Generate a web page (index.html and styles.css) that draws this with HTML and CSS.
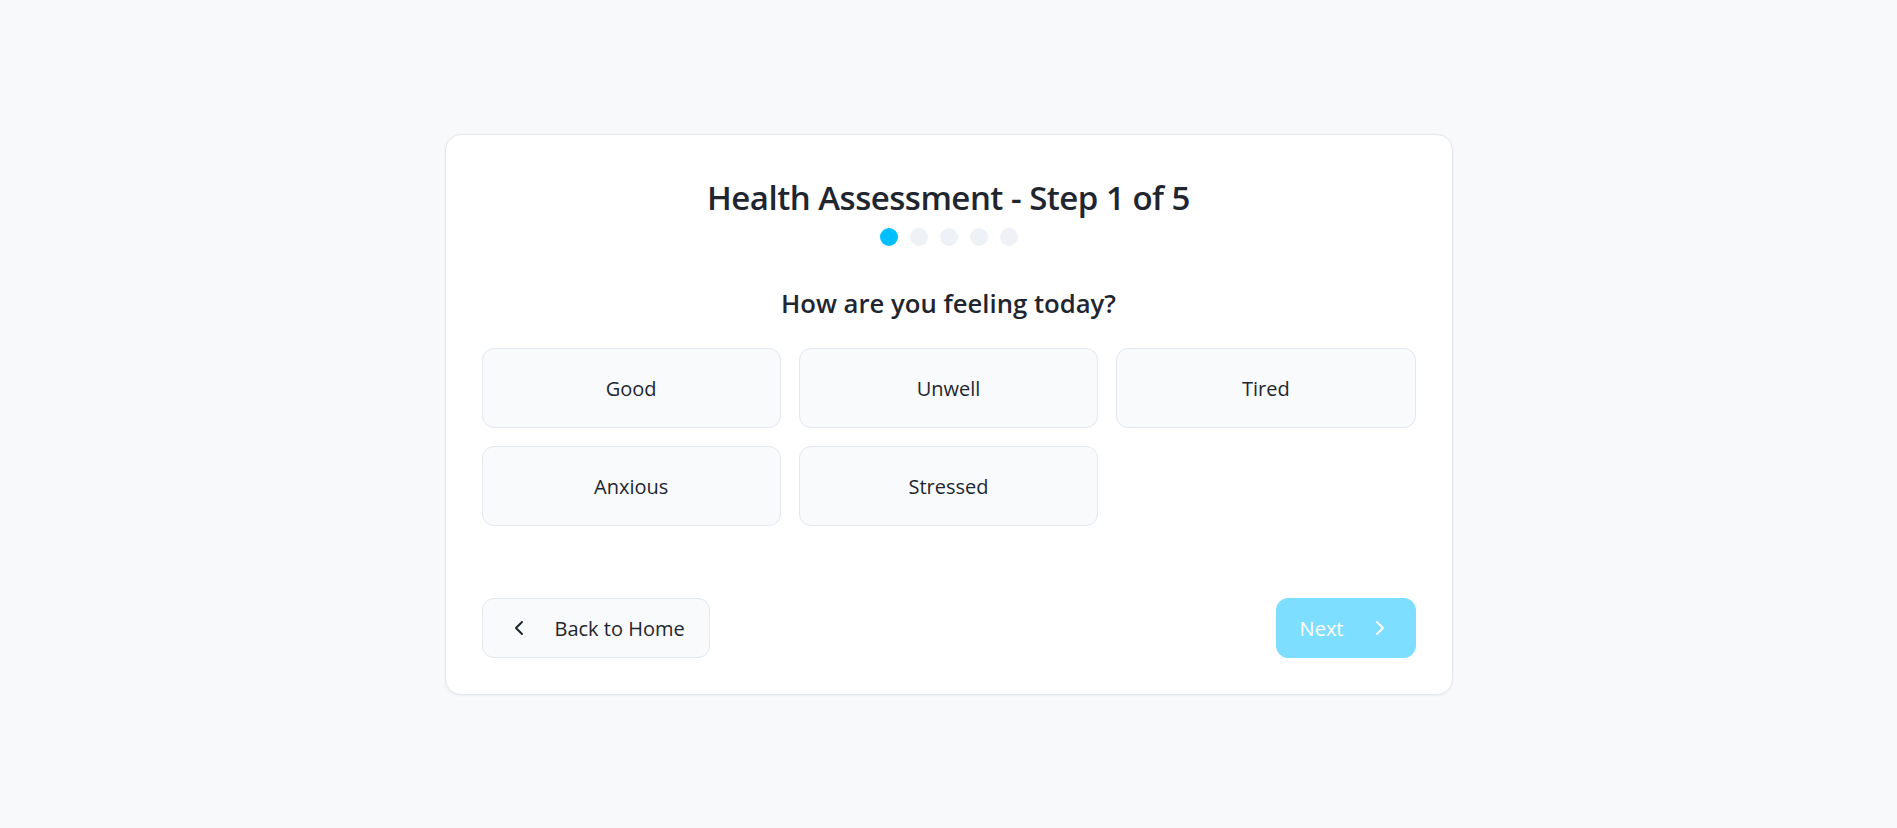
FILE: index.html
```html
<!DOCTYPE html>
<html lang="en">
<head>
<meta charset="utf-8">
<title>Health Assessment</title>
<link rel="stylesheet" href="styles.css">
</head>
<body>
<main class="page">
  <section class="card">
    <h1 class="title">Health Assessment - Step 1 of 5</h1>
    <div class="steps">
      <span class="dot dot-active"></span>
      <span class="dot"></span>
      <span class="dot"></span>
      <span class="dot"></span>
      <span class="dot"></span>
    </div>
    <h2 class="question">How are you feeling today?</h2>
    <div class="options">
      <button class="option">Good</button>
      <button class="option">Unwell</button>
      <button class="option">Tired</button>
      <button class="option">Anxious</button>
      <button class="option">Stressed</button>
    </div>
    <div class="actions">
      <button class="btn btn-back">
        <svg class="icon" viewBox="0 0 24 24" width="24" height="24" fill="none" stroke="currentColor" stroke-width="2" stroke-linecap="round" stroke-linejoin="round"><path d="m15 18-6-6 6-6"/></svg>
        <span>Back to Home</span>
      </button>
      <button class="btn btn-next" disabled>
        <span>Next</span>
        <svg class="icon" viewBox="0 0 24 24" width="24" height="24" fill="none" stroke="currentColor" stroke-width="2" stroke-linecap="round" stroke-linejoin="round"><path d="m9 18 6-6-6-6"/></svg>
      </button>
    </div>
  </section>
</main>
</body>
</html>
```
FILE: styles.css
```css
* { box-sizing: border-box; }

html, body {
  margin: 0;
  padding: 0;
}

body {
  background: #f8f9fb;
  font-family: "Open Sans", "Noto Sans", sans-serif;
  color: #1f2630;
}

.page {
  min-height: 100vh;
  display: flex;
  align-items: center;
  justify-content: center;
}

.card {
  width: 1008px;
  background: #ffffff;
  border: 1px solid #e3e8ef;
  border-radius: 16px;
  box-shadow: 0 1px 3px rgba(15, 23, 42, 0.05);
  padding: 36px;
  display: flex;
  flex-direction: column;
}

.title {
  margin: 2px 0 0;
  text-align: center;
  font-size: 33px;
  letter-spacing: -0.5px;
  line-height: 50px;
  font-weight: 600;
  color: #1f2630;
}

.steps {
  margin-top: 5px;
  display: flex;
  justify-content: center;
  gap: 12px;
}

.dot {
  width: 18px;
  height: 18px;
  border-radius: 50%;
  background: #eef2f7;
}

.dot-active {
  background: #00bfff;
}

.question {
  margin: 40px 0 0;
  text-align: center;
  font-size: 25.7px;
  line-height: 36px;
  font-weight: 600;
  color: #1f2630;
}

.options {
  margin-top: 26px;
  display: grid;
  grid-template-columns: repeat(3, 1fr);
  gap: 18px;
}

.option {
  height: 80px;
  padding: 2px 0 0;
  background: #f8fafc;
  border: 1px solid #e2e8f0;
  border-radius: 12px;
  font-family: inherit;
  font-size: 20px;
  line-height: 28px;
  color: #1f2630;
  display: flex;
  align-items: center;
  justify-content: center;
  cursor: pointer;
}

.actions {
  margin-top: 72px;
  display: flex;
  justify-content: space-between;
  align-items: center;
}

.btn {
  height: 60px;
  display: flex;
  align-items: center;
  gap: 24px;
  padding: 2px 24px 0;
  border-radius: 12px;
  font-family: inherit;
  font-size: 20px;
  line-height: 28px;
  cursor: pointer;
}

.btn .icon {
  margin-top: -2px;
}

.btn-back {
  background: #f8fafc;
  border: 1px solid #e2e8f0;
  color: #1f2630;
}

.btn-next {
  padding-left: 23px;
  padding-right: 23px;
  background: #00bfff;
  border: 1px solid #00bfff;
  color: #ffffff;
  opacity: 0.5;
  cursor: not-allowed;
}

.icon {
  display: block;
  flex: none;
}
```
